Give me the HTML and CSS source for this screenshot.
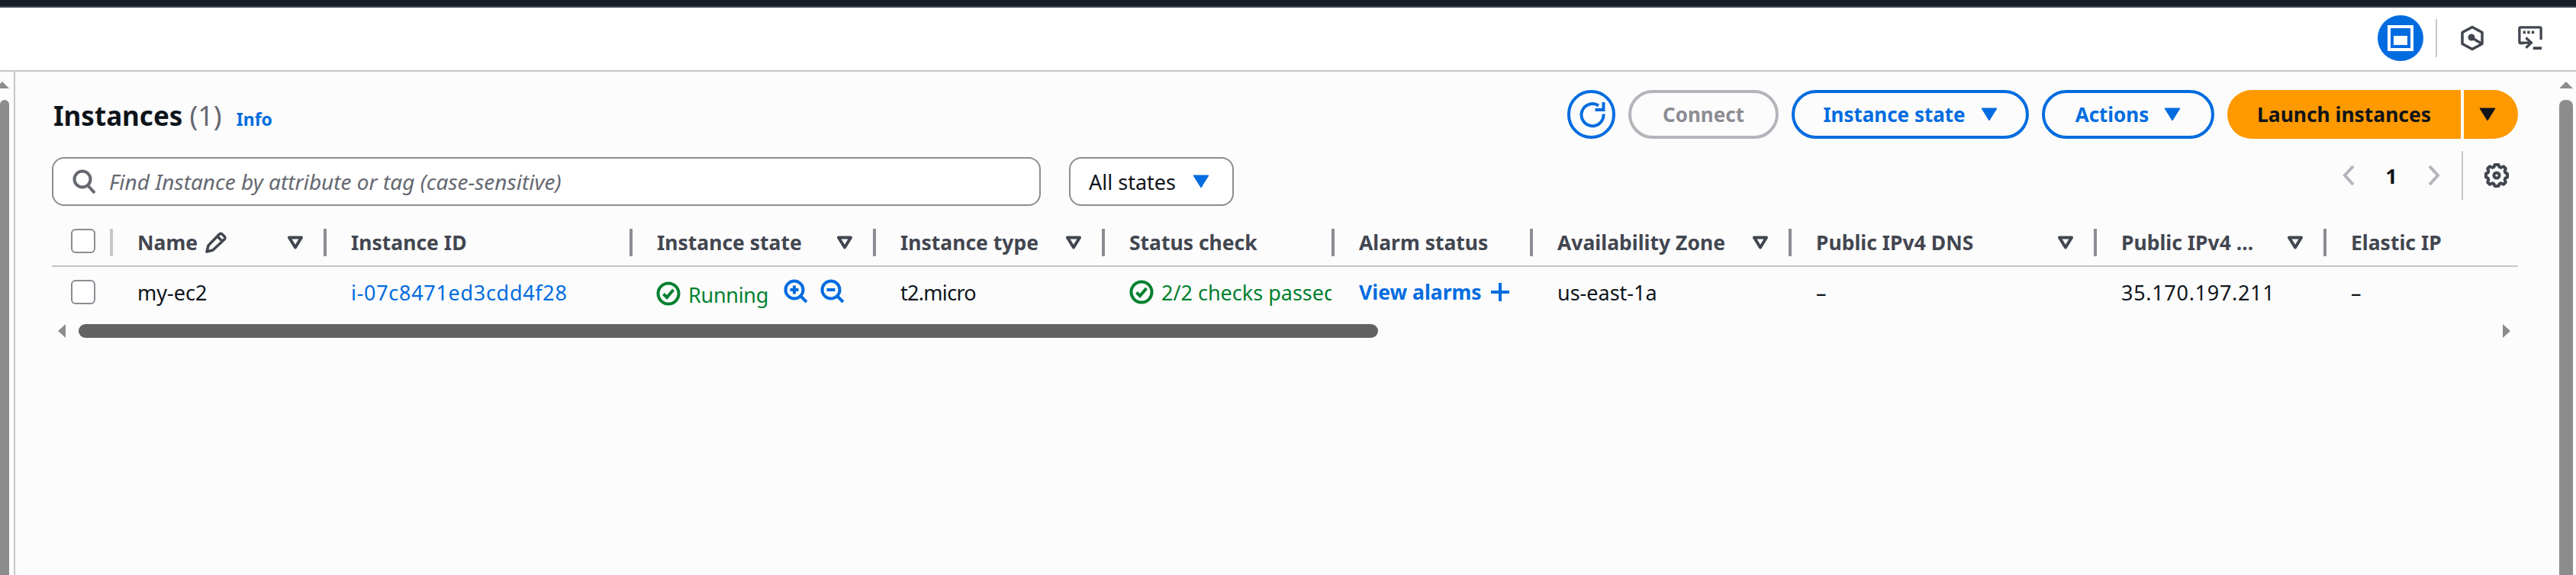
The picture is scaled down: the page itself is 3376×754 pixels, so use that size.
FILE: index.html
```html
<!DOCTYPE html>
<html lang="en">
<head>
<meta charset="utf-8">
<title>Instances</title>
<link rel="stylesheet" href="styles.css">
</head>
<body>
<div class="topbar"></div>
<header class="utility">
  <span class="util-active"><svg width="34" height="34" viewBox="0 0 34 34"><rect x="2" y="2" width="30" height="30" fill="none" stroke="#fff" stroke-width="4"/><rect x="8" y="14" width="18" height="12" fill="#fff"/></svg></span>
  <span class="util-sep"></span>
  <svg class="util-hex" width="32" height="34" viewBox="0 0 32 34" fill="none" stroke="#424650" stroke-width="3.5"><path d="M16 2.500 29 9.500V24.500L16 31.500 3 24.500V9.500Z" stroke-linejoin="round"/><circle cx="15" cy="16" r="3.500" fill="#424650" stroke-width="2"/><path d="M17 17.500 28 24"/></svg>
  <svg class="util-term" width="32" height="32" viewBox="0 0 34 34" fill="none" stroke="#424650" stroke-width="3.500"><path d="M8 24H3.500a1.500 1.500 0 0 1-1.500-1.500V3.500A1.500 1.500 0 0 1 3.500 2h27A1.500 1.500 0 0 1 32 3.500V19"/><path d="M11 16.500 18.500 23.500 11 30.500M3 23.500H18"/><path d="M21 31H33" stroke-width="4"/><path d="M7 9h3.500M13 9h3.500M19 9h3.500" stroke-width="4"/></svg>
</header>
<div class="workspace">
  <div class="page-scroll page-scroll-left"><svg class="sb-up" width="12" height="9" viewBox="0 0 12 9"><path d="M3 0 12 9H-6Z" fill="#8c8c8c"/></svg><div class="sb-thumb"></div></div>
  <main class="panel">
    <div class="toolbar">
      <h1 class="title">Instances <span class="count">(1)</span> <a class="info">Info</a></h1>
      <div class="actions">
        <button class="btn btn-icon"><svg width="36" height="36" viewBox="0 0 36 36" fill="none" stroke="#006ce0" stroke-width="4"><path d="M33.500 17.500A14.500 14.500 0 1 1 27 6.500"/><path d="M33.500 2V12H22.500"/></svg></button>
        <button class="btn btn-disabled">Connect</button>
        <button class="btn btn-normal">Instance state<svg class="caret" width="22" height="18" viewBox="0 0 22 18"><path d="M1 1H21L11 17Z" fill="#006ce0" stroke="#006ce0" stroke-linejoin="round"/></svg></button>
        <button class="btn btn-normal btn-actions">Actions<svg class="caret" width="22" height="18" viewBox="0 0 22 18"><path d="M1 1H21L11 17Z" fill="#006ce0" stroke="#006ce0" stroke-linejoin="round"/></svg></button>
        <div class="split">
          <button class="btn btn-primary">Launch instances</button>
          <button class="btn btn-primary-caret"><svg width="22" height="18" viewBox="0 0 22 18"><path d="M1 1H21L11 17Z" fill="#0f141a" stroke="#0f141a" stroke-linejoin="round"/></svg></button>
        </div>
      </div>
    </div>
    <div class="filters">
      <div class="search">
        <svg width="32" height="32" viewBox="0 0 32 32" fill="none" stroke="#656871" stroke-width="4"><circle cx="14" cy="13" r="10.500"/><path d="M21 21 30 31"/></svg>
        <span class="placeholder">Find Instance by attribute or tag (case-sensitive)</span>
      </div>
      <div class="state-select">All states<svg width="22" height="18" viewBox="0 0 22 18"><path d="M1 1H21L11 17Z" fill="#006ce0" stroke="#006ce0" stroke-linejoin="round"/></svg></div>
      <div class="pager">
        <svg class="pg-prev" width="16" height="26" viewBox="0 0 16 26" fill="none" stroke="#b4b4bb" stroke-width="4"><path d="M14 1 3 13 14 25"/></svg>
        <span class="pg-num">1</span>
        <svg class="pg-next" width="16" height="26" viewBox="0 0 16 26" fill="none" stroke="#b4b4bb" stroke-width="4"><path d="M2 1 13 13 2 25"/></svg>
        <span class="pg-sep"></span>
        <svg class="pg-gear" width="32" height="32" viewBox="0 0 16 16" fill="none" stroke="#424650" stroke-width="2" stroke-linejoin="round"><path d="m13.300 5.200.6-1.700L12.500 2.100l-1.700.8-1-.4L9.200 1H6.800l-.6 1.500-1 .4-1.700-.8L2.100 3.500l.6 1.700-.4 1L1 6.800v2.400l1.300.6.4 1-.6 1.700 1.400 1.400 1.700-.8 1 .4.6 1.500h2.400l.6-1.500 1-.4 1.700.8 1.400-1.400-.6-1.700.4-1L15 9.200V6.800l-1.300-.6Z"/><circle cx="8" cy="8" r="1.800"/></svg>
      </div>
    </div>
    <div class="table-head cols">
      <div class="th th-check"><span class="checkbox"></span></div>
      <div class="th th-first">Name<svg class="pencil" width="30" height="30" viewBox="0 0 30 30" fill="none" stroke="#424650" stroke-width="3.500" stroke-linejoin="round"><path d="M3 27 5 19 19 4.500a3 3 0 0 1 4-.5l3 3a3 3 0 0 1 0 4L11 25ZM17 7 23 13"/></svg><svg class="filter" width="20" height="18" viewBox="0 0 20 18" fill="none" stroke="#424650" stroke-width="4" stroke-linejoin="round"><path d="M2 2.500H18L10 15.500Z"/></svg></div>
      <div class="th sep">Instance ID</div>
      <div class="th sep">Instance state<svg class="filter" width="20" height="18" viewBox="0 0 20 18" fill="none" stroke="#424650" stroke-width="4" stroke-linejoin="round"><path d="M2 2.500H18L10 15.500Z"/></svg></div>
      <div class="th sep">Instance type<svg class="filter" width="20" height="18" viewBox="0 0 20 18" fill="none" stroke="#424650" stroke-width="4" stroke-linejoin="round"><path d="M2 2.500H18L10 15.500Z"/></svg></div>
      <div class="th sep">Status check</div>
      <div class="th sep">Alarm status</div>
      <div class="th sep">Availability Zone<svg class="filter" width="20" height="18" viewBox="0 0 20 18" fill="none" stroke="#424650" stroke-width="4" stroke-linejoin="round"><path d="M2 2.500H18L10 15.500Z"/></svg></div>
      <div class="th sep">Public IPv4 DNS<svg class="filter" width="20" height="18" viewBox="0 0 20 18" fill="none" stroke="#424650" stroke-width="4" stroke-linejoin="round"><path d="M2 2.500H18L10 15.500Z"/></svg></div>
      <div class="th sep">Public IPv4 ...<svg class="filter" width="20" height="18" viewBox="0 0 20 18" fill="none" stroke="#424650" stroke-width="4" stroke-linejoin="round"><path d="M2 2.500H18L10 15.500Z"/></svg></div>
      <div class="th sep">Elastic IP</div>
    </div>
    <div class="table-row cols">
      <div class="td th-check"><span class="checkbox"></span></div>
      <div class="td">my-ec2</div>
      <div class="td"><a class="link digits">i-07c8471ed3cdd4f28</a></div>
      <div class="td state">
        <svg class="ok ok-run" width="32" height="32" viewBox="0 0 32 32" fill="none" stroke="#00802f" stroke-width="4"><circle cx="16" cy="16" r="13.500"/><path d="M9.500 16.500 14 21 22.500 11"/></svg>
        <span class="green running">Running</span>
        <svg class="zoom-in" width="32" height="32" viewBox="0 0 32 32" fill="none" stroke="#006ce0" stroke-width="4"><circle cx="14" cy="14" r="11.500"/><path d="M22 22 30 30M14 8.500V19.500M8.500 14H19.500"/></svg>
        <svg class="zoom-out" width="32" height="32" viewBox="0 0 32 32" fill="none" stroke="#006ce0" stroke-width="4"><circle cx="14" cy="14" r="11.500"/><path d="M22 22 30 30M8.500 14H19.500"/></svg>
      </div>
      <div class="td"><span class="tight">t2.micro</span></div>
      <div class="td status"><svg class="ok" width="32" height="32" viewBox="0 0 32 32" fill="none" stroke="#00802f" stroke-width="4"><circle cx="16" cy="16" r="13.500"/><path d="M9.500 16.500 14 21 22.500 11"/></svg><span class="green">2/2 checks passed</span></div>
      <div class="td"><a class="link link-bold">View alarms</a><svg class="plus" width="24" height="24" viewBox="0 0 24 24" stroke="#006ce0" stroke-width="4"><path d="M12 0V24M0 12H24"/></svg></div>
      <div class="td">us-east-1a</div>
      <div class="td">–</div>
      <div class="td"><span class="digits">35.170.197.211</span></div>
      <div class="td">–</div>
    </div>
    <div class="h-scroll">
      <svg width="10" height="18" viewBox="0 0 10 18"><path d="M10 0V18L0 9Z" fill="#8c8c8c"/></svg>
      <div class="h-track"><div class="h-thumb"></div></div>
      <svg width="10" height="18" viewBox="0 0 10 18"><path d="M0 0V18L10 9Z" fill="#8c8c8c"/></svg>
    </div>
  </main>
  <div class="page-scroll page-scroll-right"><svg class="sb-up" width="18" height="9" viewBox="0 0 18 9"><path d="M9 0 18 9H0Z" fill="#8c8c8c"/></svg><div class="sb-thumb"></div></div>
</div>
</body>
</html>
```
FILE: styles.css
```css
* { box-sizing: border-box; }
html, body { margin: 0; height: 100%; overflow: hidden; }
body {
  background: #fff;
  color: #0f141a;
  font-family: "Noto Sans", "Open Sans", sans-serif;
  font-size: 27px;
  display: flex;
  flex-direction: column;
}
.topbar { height: 10px; background: #161d26; border-bottom: 2px solid #424650; flex: none; }
.utility {
  height: 82px;
  flex: none;
  display: flex;
  align-items: center;
  justify-content: flex-end;
  padding: 0 44px 2px 0;
}
.util-active {
  width: 60px; height: 60px; border-radius: 50%;
  background: #006ce0;
  display: flex; align-items: center; justify-content: center;
}
.util-sep { width: 2px; height: 50px; background: #c6c6cd; margin: 0 30px 0 16px; }
.util-hex { margin-right: 44px; }

.workspace { flex: 1; display: flex; border-top: 2px solid #c6c6cd; background: #fcfcfc; min-height: 0; }
.page-scroll { flex: none; display: flex; flex-direction: column; align-items: center; padding-top: 13px; }
.page-scroll-left { width: 20px; border-right: 2px solid #c6c6cd; padding-right: 6px; align-items: flex-start; }
.page-scroll-right { width: 18px; margin: 0 4px 0 0; }
.sb-up { flex: none; }
.sb-thumb { flex: 1; width: 100%; margin-top: 15px; background: #8c8c8c; border-radius: 8px 8px 0 0; }
.page-scroll-left .sb-thumb { width: 12px; }

.panel { flex: 1; min-width: 0; padding: 24px 54px 0 48px; }
.panel > * { width: 3232px; }

.toolbar { display: flex; justify-content: space-between; align-items: flex-start; height: 64px; }
.title { margin: 0; font-size: 35px; line-height: 52px; font-weight: 700; padding: 8px 0 0 2px; color: #0f141a; white-space: nowrap; }
.count { font-weight: 400; color: #656871; font-size: 36px; }
.info { font-size: 23px; font-weight: 700; color: #006ce0; margin-left: 10px; }

.actions { display: flex; gap: 17px; }
.btn {
  height: 64px; padding: 0 40px;
  border-radius: 32px;
  font: 700 26px "Noto Sans", sans-serif;
  background: transparent;
  display: flex; align-items: center; justify-content: center;
  white-space: nowrap;
}
.btn-icon { width: 63px; padding: 0; border: 4px solid #006ce0; }
.btn-disabled { width: 197px; padding: 0; border: 4px solid #b4b4bb; color: #8c8c94; }
.btn-normal { width: 311px; padding: 0; gap: 20px; border: 4px solid #006ce0; color: #006ce0; }
.btn-actions { width: 226px; }
.split { display: flex; gap: 4px; }
.btn-primary { width: 306px; padding: 0; border: 0; background: #f90; color: #0f141a; border-radius: 32px 0 0 32px; font-size: 26.4px; }
.btn-primary-caret { width: 71px; padding: 0 10px 0 0; border: 0; background: #f90; border-radius: 0 32px 32px 0; }

.filters { display: flex; align-items: flex-start; margin-top: 16px; height: 102px; }
.search {
  width: 1296px; height: 64px; margin-top: 8px;
  border: 2px solid #8c8c94; border-radius: 16px;
  background: #fff;
  display: flex; align-items: center; gap: 17px; padding: 0 0 0 24px;
}
.placeholder { font-style: italic; color: #656871; font-size: 28px; white-space: nowrap; }
.state-select {
  width: 216px; height: 64px; margin: 8px 0 0 37px;
  border: 2px solid #8c8c94; border-radius: 16px;
  background: #fff;
  display: flex; align-items: center; gap: 22px; padding-left: 24px;
  white-space: nowrap;
}
.pager { margin-left: auto; display: flex; align-items: center; height: 64px; padding-right: 12px; }
.pg-num { width: 96px; text-align: center; font-weight: 700; }
.pg-sep { width: 2px; height: 64px; background: #c6c6cd; margin: 0 28px; }
.pg-prev, .pg-next { flex: none; }

.cols {
  display: grid;
  grid-template-columns: 76px 280px 401px 319px 300px 301px 260px 339px 400px 301px 255px;
}
.table-head { height: 50px; border-bottom: 2px solid #c6c6cd; font-weight: 700; color: #424650; font-size: 26.5px; }
.th {
  position: relative;
  height: 36px;
  display: flex; align-items: center;
  padding-left: 36px;
  padding-right: 27px;
  white-space: nowrap;
}
.th-first::before, .sep::before {
  content: ""; position: absolute; left: 0; top: 0;
  width: 4px; height: 36px; background: #8c8c94;
}
.th-first::before { background: #c6c6cd; }
.th .filter { margin-left: auto; }
.pencil { margin-left: 9px; }
.th-check { padding: 0 0 0 25px; align-items: flex-start; }
.checkbox { display: block; width: 32px; height: 32px; border: 2px solid #8c8c94; border-radius: 6px; background: #fff; }
.table-row { height: 66px; color: #0f141a; }
.td { display: flex; align-items: center; padding-left: 36px; white-space: nowrap; overflow: hidden; }
.td.th-check { padding-left: 25px; align-items: center; }
.digits { letter-spacing: .7px; }
.tight { letter-spacing: -.7px; }
.link { color: #006ce0; }
.link-bold { font-weight: 700; font-size: 26.5px; }
.plus { margin-left: 12px; flex: none; }
.green { color: #00802f; }
.ok { flex: none; margin-right: 10px; }
.state { padding-left: 35px; }
.ok-run { margin-top: 4px; }
.running { margin-top: 6px; letter-spacing: -.3px; }
.zoom-in { margin: -2px 0 0 20px; flex: none; }
.zoom-out { margin: -2px 0 0 16px; flex: none; }

.h-scroll { display: flex; align-items: center; gap: 0; margin-top: 9px; height: 18px; padding: 0 10px 0 8px; }
.h-scroll svg { flex: none; }
.h-track { flex: 1; height: 18px; padding: 0 0 0 17px; }
.h-thumb { width: 1703px; height: 18px; background: #636363; border-radius: 9px; }
```
